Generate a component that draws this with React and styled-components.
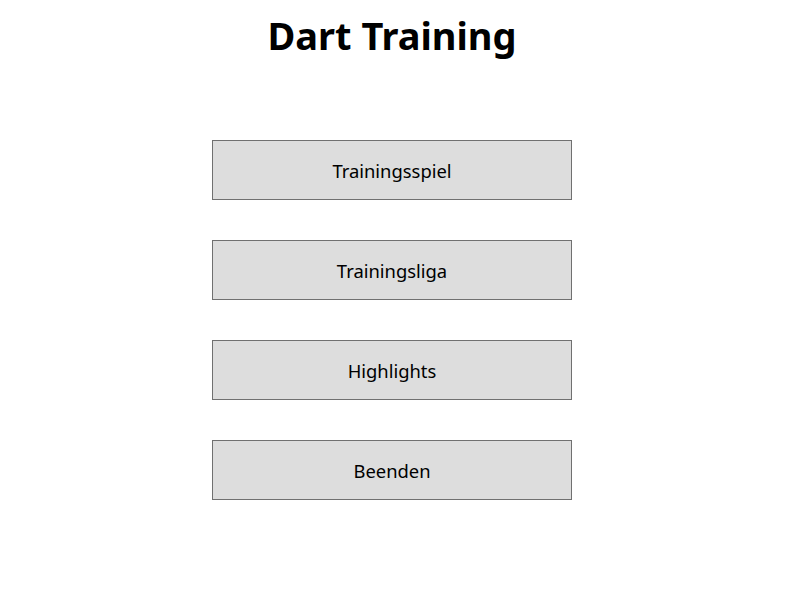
import React from 'react';
import styled, { createGlobalStyle } from 'styled-components';

const GlobalStyle = createGlobalStyle`
  body {
    margin: 0;
    background: #ffffff;
    font-family: "Noto Sans", "Open Sans", sans-serif;
  }
`;

const Page = styled.div`
  width: 784px;
  display: flex;
  flex-direction: column;
  align-items: center;
`;

const Title = styled.h1`
  margin: 9px 0 0;
  font-size: 38px;
  line-height: 52px;
  font-weight: 700;
  color: #000;
`;

const Menu = styled.div`
  margin-top: 79px;
  display: flex;
  flex-direction: column;
  gap: 40px;
`;

const MenuButton = styled.button`
  width: 360px;
  height: 60px;
  box-sizing: border-box;
  background: #dddddd;
  border: 1px solid #707070;
  border-radius: 0;
  font-family: inherit;
  font-size: 18.4px;
  color: #000;
  padding: 0;
  cursor: pointer;
`;

const items = ['Trainingsspiel', 'Trainingsliga', 'Highlights', 'Beenden'];

export default function App() {
    return (
        <>
            <GlobalStyle />
            <Page>
                <Title>Dart Training</Title>
                <Menu>
                    {items.map((label) => (
                        <MenuButton key={label}>{label}</MenuButton>
                    ))}
                </Menu>
            </Page>
        </>
    );
}
